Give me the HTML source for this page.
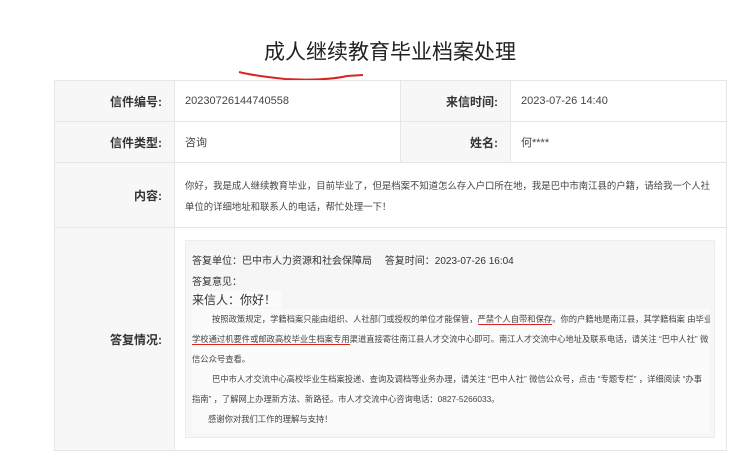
<!DOCTYPE html>
<html><head><meta charset="utf-8"><style>
*{margin:0;padding:0;box-sizing:border-box}
body{width:750px;height:454px;background:#fff;font-family:"Liberation Sans","Noto Sans CJK SC",sans-serif;color:#333;position:relative;overflow:hidden}
.a{position:absolute}
.t{left:0;width:780px;top:36px;text-align:center;font-size:21px;color:#222}
.c{position:absolute;border:1px solid #e6e6e6}
.l{background:#f7f7f7;text-align:right;font-weight:bold;font-size:12px;color:#333;padding-right:12px}
.v{font-size:11px;color:#444;padding-left:10px}
.fl{display:flex;align-items:center}
.fr{display:flex;align-items:center;justify-content:flex-end}
.box{left:185px;top:240px;width:530px;height:198px;background:#f6f6f6;border:1px solid #ececec}
.s{font-size:10px;color:#333;position:absolute;left:6px;white-space:nowrap}
.p{position:absolute;left:6px;width:518px;top:68px;height:124px;background:#fbfbfb;font-size:8.3px;color:#444;line-height:20px}
</style></head><body>
<div class="a t">成人继续教育毕业档案处理</div>
<svg class="a" style="left:235px;top:68px" width="130" height="16"><path d="M4 4 Q20 8 50 11 Q90 13 112 8 L128 7" stroke="#d22" stroke-width="2" fill="none"/></svg>
<div class="c l fr" style="left:54px;top:80px;width:121px;height:42px">信件编号:</div>
<div class="c v fl" style="left:174px;top:80px;width:227px;height:42px">20230726144740558</div>
<div class="c l fr" style="left:400px;top:80px;width:111px;height:42px">来信时间:</div>
<div class="c v fl" style="left:510px;top:80px;width:217px;height:42px">2023-07-26 14:40</div>
<div class="c l fr" style="left:54px;top:121px;width:121px;height:42px">信件类型:</div>
<div class="c v fl" style="left:174px;top:121px;width:227px;height:42px">咨询</div>
<div class="c l fr" style="left:400px;top:121px;width:111px;height:42px">姓名:</div>
<div class="c v fl" style="left:510px;top:121px;width:217px;height:42px">何****</div>
<div class="c l fr" style="left:54px;top:162px;width:121px;height:66px">内容:</div>
<div class="c v" style="left:174px;top:162px;width:553px;height:66px;font-size:9.4px;line-height:21px;padding-top:12px;padding-right:8px">你好，我是成人继续教育毕业，目前毕业了，但是档案不知道怎么存入户口所在地，我是巴中市南江县的户籍，请给我一个人社单位的详细地址和联系人的电话，帮忙处理一下！</div>
<div class="c l fr" style="left:54px;top:227px;width:121px;height:224px">答复情况:</div>
<div class="c" style="left:174px;top:227px;width:553px;height:224px"></div>
<div class="a box">
<div class="s" style="top:11px">答复单位：巴中市人力资源和社会保障局　 答复时间：2023-07-26 16:04</div>
<div class="s" style="top:32px">答复意见：</div>
<div class="s" style="top:50px;font-size:12px;background:#fafafa;padding-right:6px">来信人：你好！</div>
<div class="p">
<div style="text-indent:20px;white-space:nowrap;overflow:hidden">按照政策规定，学籍档案只能由组织、人社部门或授权的单位才能保管，<span style="border-bottom:1.5px solid #d22">严禁个人自带和保存</span>。你的户籍地是南江县，其学籍档案 由毕业</div>
<div style="white-space:nowrap;overflow:hidden"><span style="border-bottom:1.5px solid #d22">学校通过机要件或邮政高校毕业生档案专用</span>渠道直接寄往南江县人才交流中心即可。南江人才交流中心地址及联系电话，请关注 “巴中人社” 微</div>
<div>信公众号查看。</div>
<div style="text-indent:20px;white-space:nowrap;overflow:hidden">巴中市人才交流中心高校毕业生档案投递、查询及调档等业务办理，请关注 “巴中人社” 微信公众号，点击 “专题专栏” ，详细阅读 “办事</div>
<div>指南” ，了解网上办理新方法、新路径。市人才交流中心咨询电话：0827-5266033。</div>
<div style="text-indent:16px">感谢你对我们工作的理解与支持！</div>
</div>
</div>
</body></html>
